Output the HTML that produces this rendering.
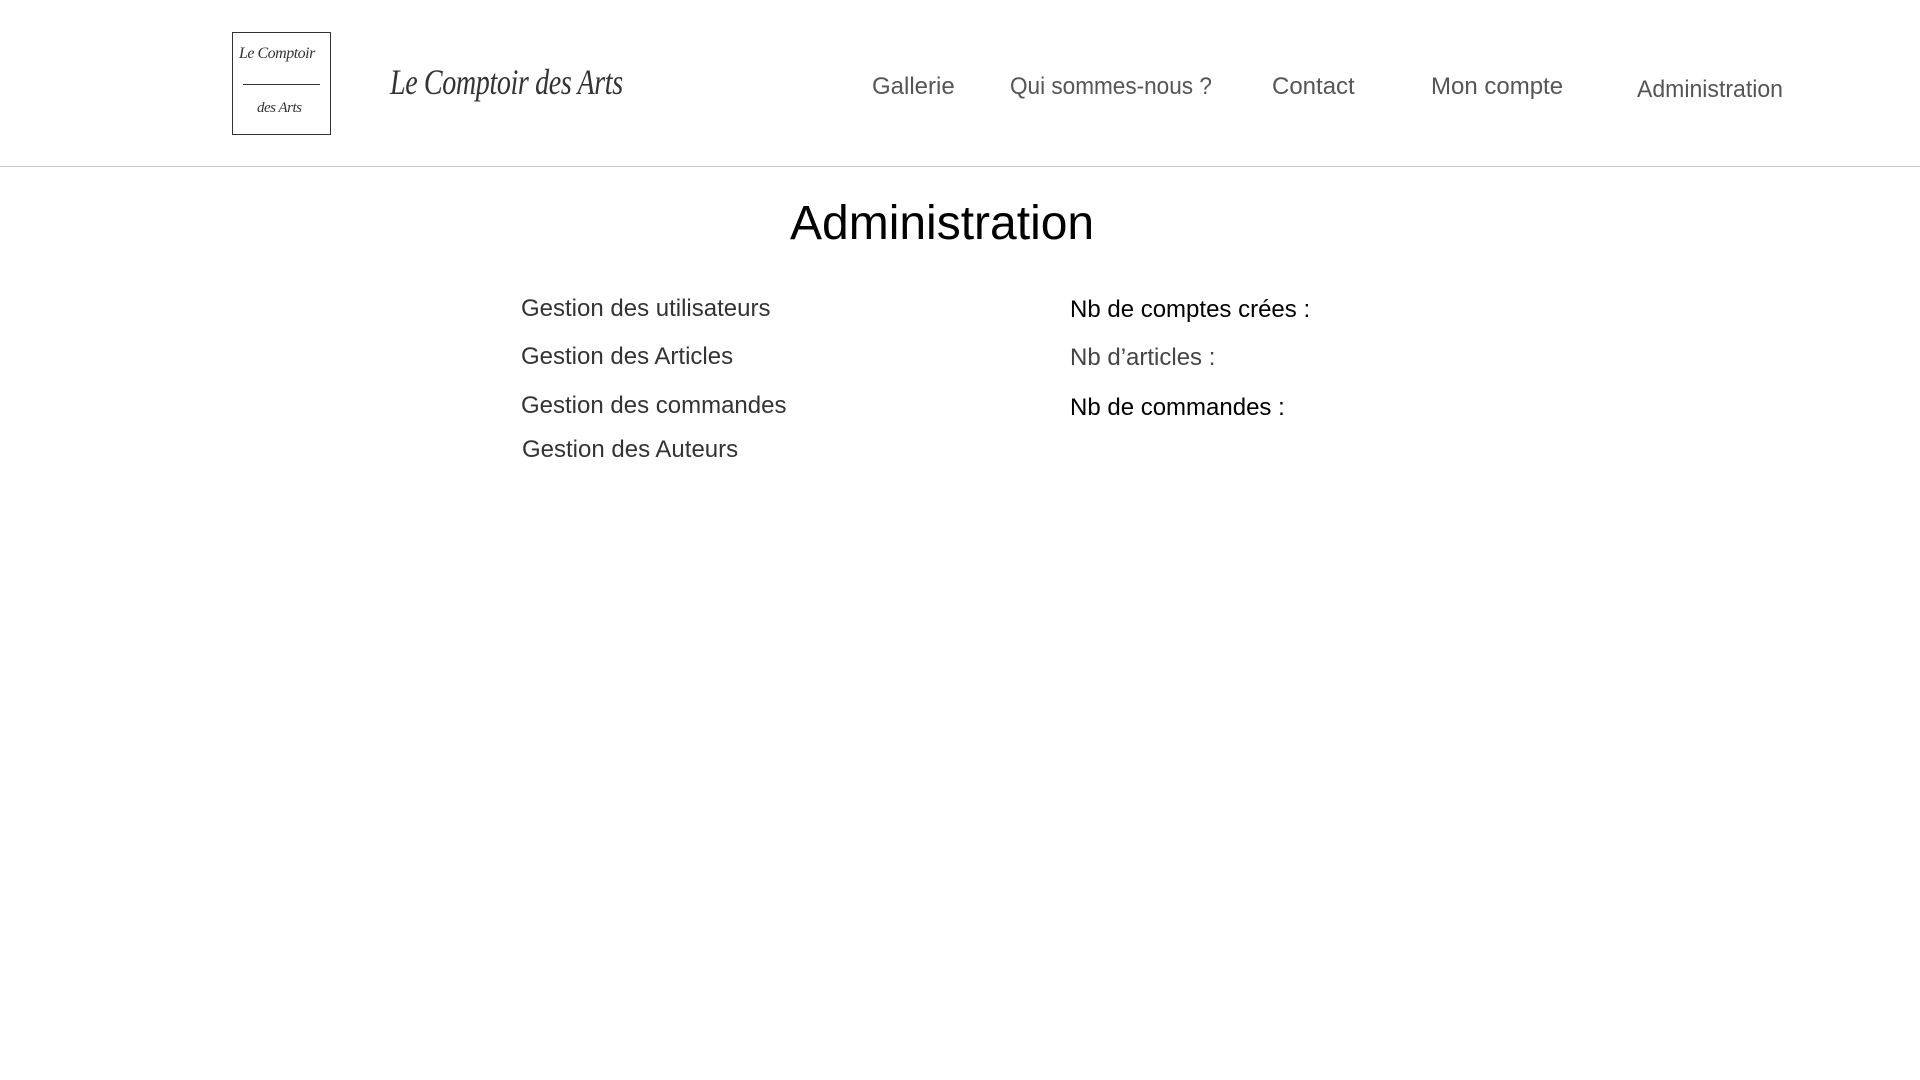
<!DOCTYPE html>
<html><head><meta charset="utf-8"><style>
html,body{margin:0;padding:0;width:1920px;height:1080px;background:#fff;overflow:hidden;font-family:"Liberation Sans",Arial,sans-serif;position:relative}
.a{position:absolute;white-space:nowrap;line-height:1}
.box{position:absolute;left:232px;top:32px;width:99px;height:103px;border:1.5px solid #333;box-sizing:border-box}
.sc{font-family:"Liberation Serif",serif;font-style:italic;color:#333;letter-spacing:-0.5px;transform-origin:left top}
.nav{font-size:24px;color:#555;transform-origin:left top}
.l{font-size:24px;color:#333}
.r{font-size:24px}
</style></head><body>
<div class="box"></div>
<div class="a sc" style="left:239px;top:46px;font-size:16px">Le Comptoir</div>
<div style="position:absolute;left:243px;top:84px;width:77px;height:1px;background:#333"></div>
<div class="a sc" style="left:257px;top:101px;font-size:15px">des Arts</div>
<div class="a sc" style="left:390px;top:64px;font-size:36px;transform:scaleX(0.78)">Le Comptoir des Arts</div>

<div class="a nav" style="left:872px;top:75px">Gallerie</div>
<div class="a nav" style="left:1010px;top:75px;transform:scaleX(0.94)">Qui sommes-nous ?</div>
<div class="a nav" style="left:1272px;top:75px">Contact</div>
<div class="a nav" style="left:1431px;top:75px">Mon compte</div>
<div class="a nav" style="left:1637px;top:78px;transform:scaleX(0.96)">Administration</div>
<div style="position:absolute;left:0;top:166px;width:1920px;height:1px;background:#c8c8c8"></div>

<div class="a" style="left:790px;top:200px;font-size:48px;color:#000">Administration</div>

<div class="a l" style="left:521px;top:297px">Gestion des utilisateurs</div>
<div class="a l" style="left:521px;top:345px">Gestion des Articles</div>
<div class="a l" style="left:521px;top:394px">Gestion des commandes</div>
<div class="a l" style="left:522px;top:438px">Gestion des Auteurs</div>

<div class="a r" style="left:1070px;top:298px;color:#000">Nb de comptes crées :</div>
<div class="a r" style="left:1070px;top:346px;color:#444">Nb d’articles :</div>
<div class="a r" style="left:1070px;top:396px;color:#000">Nb de commandes :</div>
</body></html>
